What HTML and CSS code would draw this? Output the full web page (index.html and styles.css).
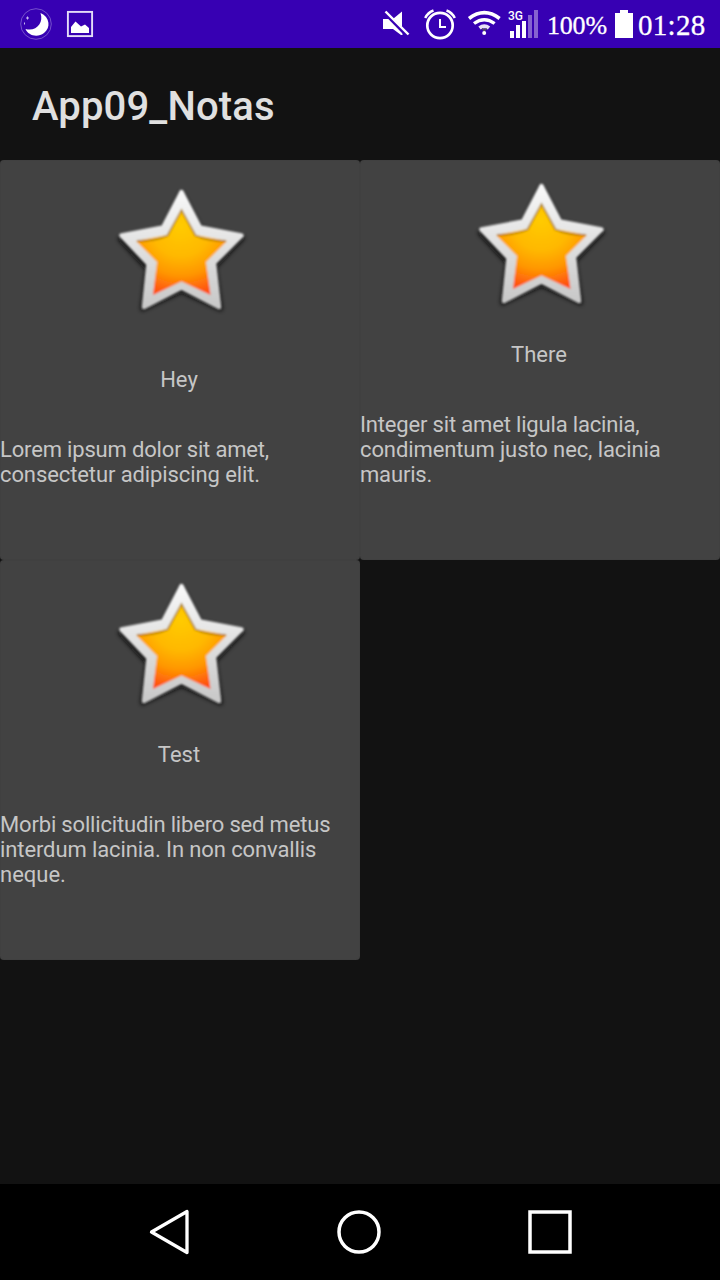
FILE: index.html
```
<!DOCTYPE html>
<html lang="es">
<head>
<meta charset="utf-8">
<title>App09_Notas</title>
<link rel="stylesheet" href="styles.css">
</head>
<body>
<svg class="defs" width="0" height="0" aria-hidden="true">
  <defs>
    <linearGradient id="silver" x1="0" y1="0" x2="0" y2="1"><stop offset="0" stop-color="#f8f8f8"/><stop offset="1" stop-color="#c8c8c8"/></linearGradient>
    <radialGradient id="gold" gradientUnits="userSpaceOnUse" cx="81" cy="56" r="76"><stop offset="0" stop-color="#ffcb00"/><stop offset=".4" stop-color="#ffb800"/><stop offset=".65" stop-color="#ff9600"/><stop offset=".9" stop-color="#ff5510"/><stop offset="1" stop-color="#ff4010"/></radialGradient>
    <filter id="shadow" x="-20%" y="-20%" width="140%" height="140%"><feGaussianBlur stdDeviation="2.2"/></filter>
    <filter id="soft" x="-10%" y="-10%" width="120%" height="120%"><feGaussianBlur stdDeviation="1.1"/></filter>
    <symbol id="star" viewBox="0 0 160 160">
      <path d="M81.500 24L100 59L142.500 68L114.500 97L120.500 139L81.500 121L42.500 139L47.500 99L20 69L63 60Z" fill="#111" stroke="#111" stroke-width="4" stroke-linejoin="round" opacity=".9" filter="url(#shadow)"/>
      <g filter="url(#soft)">
        <path d="M81.500 22L100 57.500L141.500 65.500L114 93L119 137L81.500 117.500L44 137L48.500 94L21.500 65.500L63 57.500Z" fill="url(#silver)" stroke="url(#silver)" stroke-width="4.500" stroke-linejoin="round"/>
        <path d="M81.500 39L96 65L127 71L106 92L110.500 125L81.500 111.500L53 125L57 92L36 71L67 65Z" fill="url(#gold)"/>
        <path d="M37 71Q56 71 67.500 65.500L81.500 40L95.500 65.500Q107 71 126 71" fill="none" stroke="#785500" stroke-width="1.800" opacity=".55"/>
      </g>
    </symbol>
  </defs>
</svg>
<div class="screen">
  <header class="status">
    <svg class="status-left" width="120" height="48" viewBox="0 0 120 48">
      <circle cx="36" cy="24" r="15.300" fill="none" stroke="#7651cc" stroke-width="1"/>
      <path d="M40.500 13C50 17 51 28 44 33C37.500 38 28 35.500 25.500 29C36 32 44 23 40.500 13Z" fill="#fff"/>
      <path d="M27.500 16.500v3M26 18h3M24.500 22.500v2" stroke="#c9baf0"/>
      <rect x="67.900" y="11.900" width="24.200" height="24.200" fill="none" stroke="#e4dcf7" stroke-width="1.900"/>
      <path d="M71 33V27L75.500 21.500L81 26.500L85 24.500L89 28V33Z" fill="#fff"/>
    </svg>
    <svg class="status-icons" width="170" height="48" viewBox="370 0 170 48">
      <path d="M383 19H389L402.500 32.500V35L401 35L393 29H383ZM402 11.500V27L393.500 18.500Z" fill="#fff"/>
      <path d="M384.500 14L405.500 35.500" stroke="#3700b3" stroke-width="1.600"/>
      <path d="M385.500 11.500L408.500 34.500" stroke="#fff" stroke-width="2.400"/>
      <g fill="none" stroke="#fff">
        <circle cx="440" cy="25.500" r="12.700" stroke-width="2.700"/>
        <path d="M425.200 18Q428 12.500 433.500 10.500M454.800 18Q452 12.500 446.500 10.500" stroke-width="2.500"/>
        <path d="M440 19V27H446" stroke-width="2"/>
        <path d="M469 18.500Q484.300 6.800 499.600 18.500" stroke-width="3.600"/>
        <path d="M474 23.500Q484.300 15.800 494.600 23.500" stroke-width="3.400"/>
        <path d="M479.500 28Q484.300 24.500 489 28" stroke-width="4" stroke="#e8e2f5"/>
        <path d="M482 28.500L484.300 30.500L486.600 28.500" stroke-width="1.500" stroke="#555"/>
      </g>
      <circle cx="484.200" cy="33" r="2" fill="#fff"/>
      <text x="508" y="19.500" class="network">3G</text>
      <path d="M510 31h4v7h-4zM516 25h4v13h-4zM522 21h4v17h-4z" fill="#fff"/>
      <path d="M528 15h4v23h-4zM534 10h4v28h-4z" fill="#8662d0"/>
    </svg>
    <span class="percent">100%</span>
    <svg class="battery" width="18" height="48" viewBox="0 0 18 48"><path d="M0 13H5V10H13V13H18V38H0Z" fill="#fff"/></svg>
    <span class="time">01:28</span>
  </header>
  <div class="appbar"><h1>App09_Notas</h1></div>
  <main class="notes">
    <article class="card short">
      <svg class="star"><use href="#star"/></svg>
      <h2>Hey</h2>
      <p><span class="tight">Lorem ipsum dolor sit amet,</span><br><span class="snug">consectetur adipiscing elit.</span></p>
    </article>
    <article class="card">
      <svg class="star"><use href="#star"/></svg>
      <h2>There</h2>
      <p><span class="tight">Integer sit amet ligula lacinia,</span><br><span class="snug">condimentum justo nec, lacinia</span><br><span class="tight">mauris.</span></p>
    </article>
    <article class="card">
      <svg class="star"><use href="#star"/></svg>
      <h2>Test</h2>
      <p><span class="tight">Morbi sollicitudin libero sed metus</span><br><span class="snug">interdum lacinia. In non convallis</span><br>neque.</p>
    </article>
  </main>
  <nav class="navbar">
    <svg width="44" height="48" viewBox="147 1208 44 48"><path d="M151.500 1232L187 1211.500V1252.500Z" fill="none" stroke="#fff" stroke-width="3.300" stroke-linejoin="round"/></svg>
    <svg width="48" height="48" viewBox="335 1208 48 48"><circle cx="359" cy="1232" r="20" fill="none" stroke="#fff" stroke-width="3.500"/></svg>
    <svg width="48" height="48" viewBox="526 1208 48 48"><rect x="530" y="1212" width="40" height="40" fill="none" stroke="#fff" stroke-width="3.500"/></svg>
  </nav>
</div>
</body>
</html>
```
FILE: styles.css
```
* { box-sizing: border-box; }
body { margin: 0; background: #121212; font-family: Roboto, sans-serif; }
svg { display: block; flex: none; }
.defs { position: absolute; }
.screen { display: flex; flex-direction: column; width: 720px; height: 1280px; overflow: hidden; }
.status { display: flex; flex: none; height: 48px; background: #3700b3; color: #fff; font-family: "Liberation Serif", serif; }
.status-icons { margin-left: 250px; }
.network { font: 500 12px Roboto, sans-serif; fill: #fff; }
.percent { width: 68px; margin-left: 7px; font-size: 26px; line-height: 51px; letter-spacing: -.2px; -webkit-text-stroke: .3px #fff; }
.time { margin-left: 5px; font-size: 29px; line-height: 51px; letter-spacing: .3px; -webkit-text-stroke: .3px #fff; }
.appbar { flex: none; height: 112px; padding: 34px 32px 0; }
h1 { margin: 0; font-size: 40px; font-weight: 500; line-height: 50px; letter-spacing: .15px; color: #e0e0e0; }
.notes { flex: 1; display: grid; grid-template-columns: 360px 360px; grid-auto-rows: 400px; align-content: start; }
.card { display: flex; flex-direction: column; padding-top: 4px; border-radius: 4px; background: #424242; box-shadow: inset 0 0 1px #383838; color: #c6c6c6; font-size: 22px; line-height: 25px; }
.star { width: 160px; height: 160px; margin-left: 100px; }
h2 { margin: 18px 2px 45px 0; font: inherit; text-align: center; }
p { margin: 0; white-space: nowrap; }
.tight { letter-spacing: -.17px; }
.snug { letter-spacing: -.1px; }
.short { padding-top: 10px; }
.short h2 { margin-top: 37px; }
.navbar { flex: none; display: flex; align-items: center; height: 96px; padding-left: 147px; background: #000; }
.navbar svg:nth-child(2) { margin-left: 144px; }
.navbar svg:nth-child(3) { margin-left: 143px; }
```
